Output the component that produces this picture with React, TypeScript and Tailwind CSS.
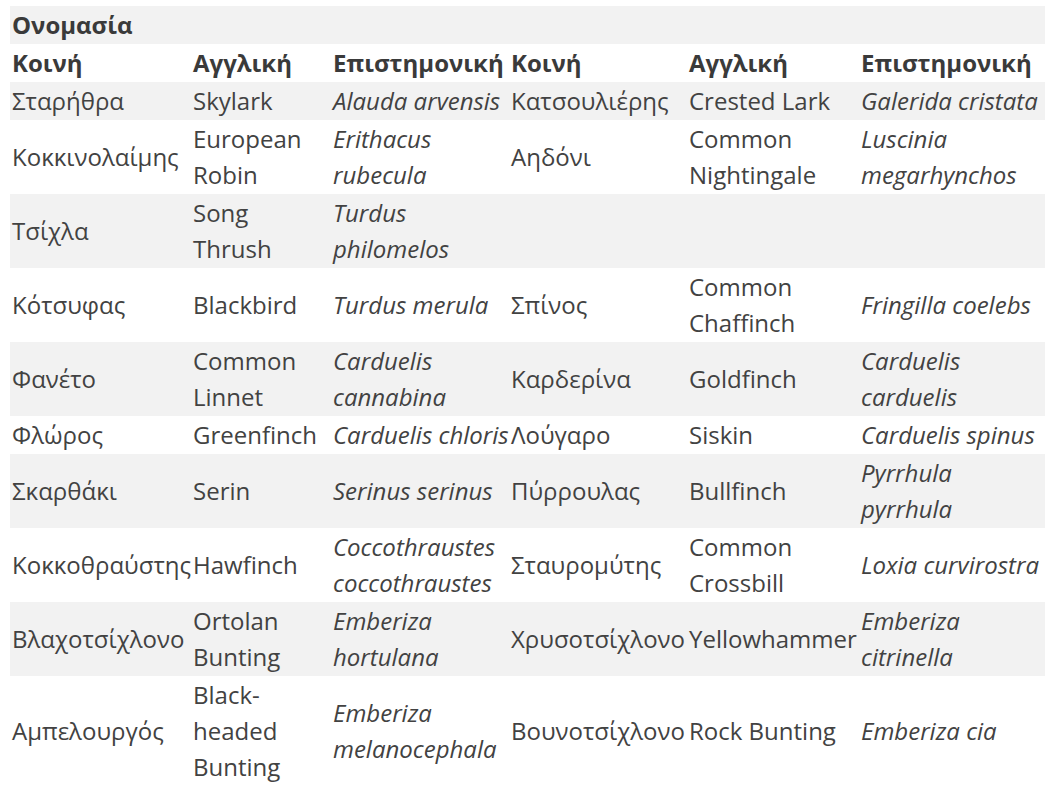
const rows: string[][] = [
  ['Σταρήθρα', 'Skylark', 'Alauda arvensis', 'Κατσουλιέρης', 'Crested Lark', 'Galerida cristata'],
  ['Κοκκινολαίμης', 'European Robin', 'Erithacus rubecula', 'Αηδόνι', 'Common Nightingale', 'Luscinia megarhynchos'],
  ['Τσίχλα', 'Song Thrush', 'Turdus philomelos', '', '', ''],
  ['Κότσυφας', 'Blackbird', 'Turdus merula', 'Σπίνος', 'Common Chaffinch', 'Fringilla coelebs'],
  ['Φανέτο', 'Common Linnet', 'Carduelis cannabina', 'Καρδερίνα', 'Goldfinch', 'Carduelis carduelis'],
  ['Φλώρος', 'Greenfinch', 'Carduelis chloris', 'Λούγαρο', 'Siskin', 'Carduelis spinus'],
  ['Σκαρθάκι', 'Serin', 'Serinus serinus', 'Πύρρουλας', 'Bullfinch', 'Pyrrhula pyrrhula'],
  ['Κοκκοθραύστης', 'Hawfinch', 'Coccothraustes coccothraustes', 'Σταυρομύτης', 'Common Crossbill', 'Loxia curvirostra'],
  ['Βλαχοτσίχλονο', 'Ortolan Bunting', 'Emberiza hortulana', 'Χρυσοτσίχλονο', 'Yellowhammer', 'Emberiza citrinella'],
  ['Αμπελουργός', 'Black-headed Bunting', 'Emberiza melanocephala', 'Βουνοτσίχλονο', 'Rock Bunting', 'Emberiza cia'],
];

const heads = ['Κοινή', 'Αγγλική', 'Επιστημονική', 'Κοινή', 'Αγγλική', 'Επιστημονική'];

export default function App() {
  return (
    <div className="bg-white min-h-screen pt-[6px] pl-[10px] text-[#424242] text-[24px] leading-[36px] font-['Open_Sans',sans-serif]">
      <table className="table-fixed border-collapse w-[1035px]">
        <colgroup>
          <col className="w-[181px]" />
          <col className="w-[140px]" />
          <col className="w-[178px]" />
          <col className="w-[178px]" />
          <col className="w-[172px]" />
          <col className="w-[186px]" />
        </colgroup>
        <thead>
          <tr className="bg-[#f2f2f2]">
            <th colSpan={6} className="text-left font-bold text-[#3a3a3a] pl-[2px] py-[1px]">Ονομασία</th>
          </tr>
          <tr>
            {heads.map((h, i) => (
              <th key={i} className="text-left font-bold text-[#3a3a3a] pl-[2px] py-[1px] whitespace-nowrap">{h}</th>
            ))}
          </tr>
        </thead>
        <tbody>
          {rows.map((r, i) => (
            <tr key={i} className={i % 2 === 0 ? 'bg-[#f2f2f2]' : ''}>
              {r.map((c, j) => (
                <td key={j} className={`pl-[2px] py-[1px] align-middle ${j === 2 || j === 5 ? 'italic' : ''}`}>
                  {c}
                </td>
              ))}
            </tr>
          ))}
        </tbody>
      </table>
    </div>
  );
}
